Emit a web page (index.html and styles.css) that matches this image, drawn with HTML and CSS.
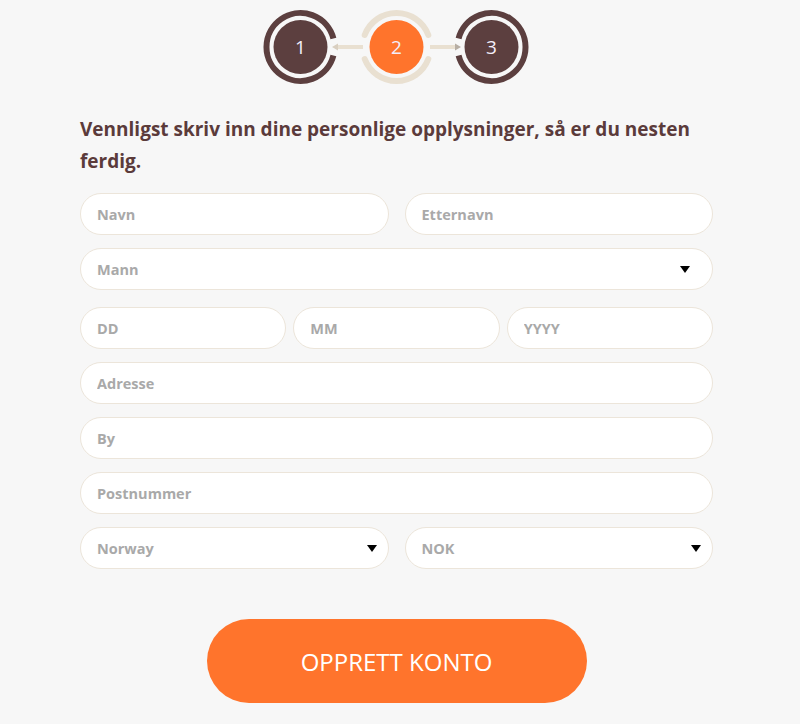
FILE: index.html
```html
<!DOCTYPE html>
<html lang="no">
<head>
<meta charset="utf-8">
<title>Registrering</title>
<link rel="stylesheet" href="styles.css">
</head>
<body>
<div class="page">
  <div class="stepper">
    <svg width="300" height="96" viewBox="0 0 300 96" xmlns="http://www.w3.org/2000/svg">
      <!-- connectors -->
      <line x1="88" y1="47" x2="116" y2="47" stroke="#e9e0d1" stroke-width="4"/>
      <path d="M85 47 L91 43.5 L91 50.5 Z" fill="#d9cfc0"/>
      <line x1="183" y1="47" x2="211" y2="47" stroke="#e9e0d1" stroke-width="4"/>
      <path d="M214 47 L208 43.5 L208 50.5 Z" fill="#b7aea4"/>
      <!-- step 1 -->
      <path d="M86.4 38.5 A34 34 0 1 0 86.4 55.5" fill="none" stroke="#5c3f3f" stroke-width="6"/>
      <circle cx="53.5" cy="47" r="27" fill="#5c3f3f"/>
      <text x="53.5" y="54" class="num">1</text>
      <!-- step 2 -->
      <path d="M181.3 35 A34 34 0 0 0 117.7 35" fill="none" stroke="#e9e0d1" stroke-width="6" stroke-linecap="round"/>
      <path d="M117.7 59 A34 34 0 0 0 181.3 59" fill="none" stroke="#e9e0d1" stroke-width="6" stroke-linecap="round"/>
      <circle cx="149.5" cy="47" r="27" fill="#ff742c"/>
      <text x="149.5" y="54" class="num">2</text>
      <!-- step 3 -->
      <path d="M211.6 38.5 A34 34 0 1 1 211.6 55.5" fill="none" stroke="#5c3f3f" stroke-width="6"/>
      <circle cx="244.5" cy="47" r="27" fill="#5c3f3f"/>
      <text x="244.5" y="54" class="num">3</text>
    </svg>
  </div>

  <h1 class="title">Vennligst skriv inn dine personlige opplysninger, så er du nesten ferdig.</h1>

  <form class="form">
    <div class="row two">
      <input class="field" type="text" placeholder="Navn">
      <input class="field" type="text" placeholder="Etternavn">
    </div>
    <div class="row">
      <div class="field select wide"><span>Mann</span><span class="caret"></span></div>
    </div>
    <div class="row three date">
      <input class="field" type="text" placeholder="DD">
      <input class="field" type="text" placeholder="MM">
      <input class="field" type="text" placeholder="YYYY">
    </div>
    <div class="row">
      <input class="field" type="text" placeholder="Adresse">
    </div>
    <div class="row">
      <input class="field" type="text" placeholder="By">
    </div>
    <div class="row">
      <input class="field" type="text" placeholder="Postnummer">
    </div>
    <div class="row two">
      <div class="field select"><span>Norway</span><span class="caret"></span></div>
      <div class="field select"><span>NOK</span><span class="caret"></span></div>
    </div>
    <div class="actions">
      <button type="button" class="submit">OPPRETT KONTO</button>
    </div>
  </form>
</div>
</body>
</html>
```

FILE: styles.css
```css
html, body {
  margin: 0;
  padding: 0;
  background: #f7f7f7;
}
body {
  font-family: "Open Sans", "Noto Sans", sans-serif;
}
.page {
  width: 633px;
  margin-left: 80px;
}
.stepper {
  display: flex;
  justify-content: center;
  height: 96px;
}
.stepper svg {
  display: block;
}
.num {
  font-family: "Open Sans", sans-serif;
  font-size: 19px;
  fill: #f3eefa;
  text-anchor: middle;
}
.title {
  margin: 17px 0 0;
  font-size: 19px;
  line-height: 32px;
  font-weight: 700;
  color: #5b3b3b;
}
.form {
  margin-top: 16px;
  display: flex;
  flex-direction: column;
  gap: 13px;
}
.row {
  display: flex;
  gap: 16px;
}
.row.three {
  gap: 7px;
}
.row.date {
  margin-top: 4px;
}
.field {
  box-sizing: border-box;
  flex: 1 1 0;
  min-width: 0;
  height: 42px;
  border: 1px solid #ece5da;
  border-radius: 21px;
  background: #ffffff;
  padding: 0 16px;
  font-family: "Open Sans", sans-serif;
  font-size: 14.5px;
  font-weight: 700;
  color: #a9a9a9;
  outline: none;
  margin: 0;
}
.field::placeholder {
  color: #a9a9a9;
  opacity: 1;
}
.select {
  display: flex;
  align-items: center;
  justify-content: space-between;
  padding-right: 11px;
}
.select.wide {
  padding-right: 22px;
}
.caret {
  width: 0;
  height: 0;
  border-left: 5.5px solid transparent;
  border-right: 5.5px solid transparent;
  border-top: 7px solid #000;
}
.actions {
  display: flex;
  justify-content: center;
  margin-top: 37px;
}
.submit {
  width: 380px;
  height: 84px;
  border: none;
  border-radius: 42px;
  background: #ff742c;
  color: #ffffff;
  font-family: "Open Sans", sans-serif;
  font-size: 24px;
  font-weight: 400;
  cursor: pointer;
}
```
